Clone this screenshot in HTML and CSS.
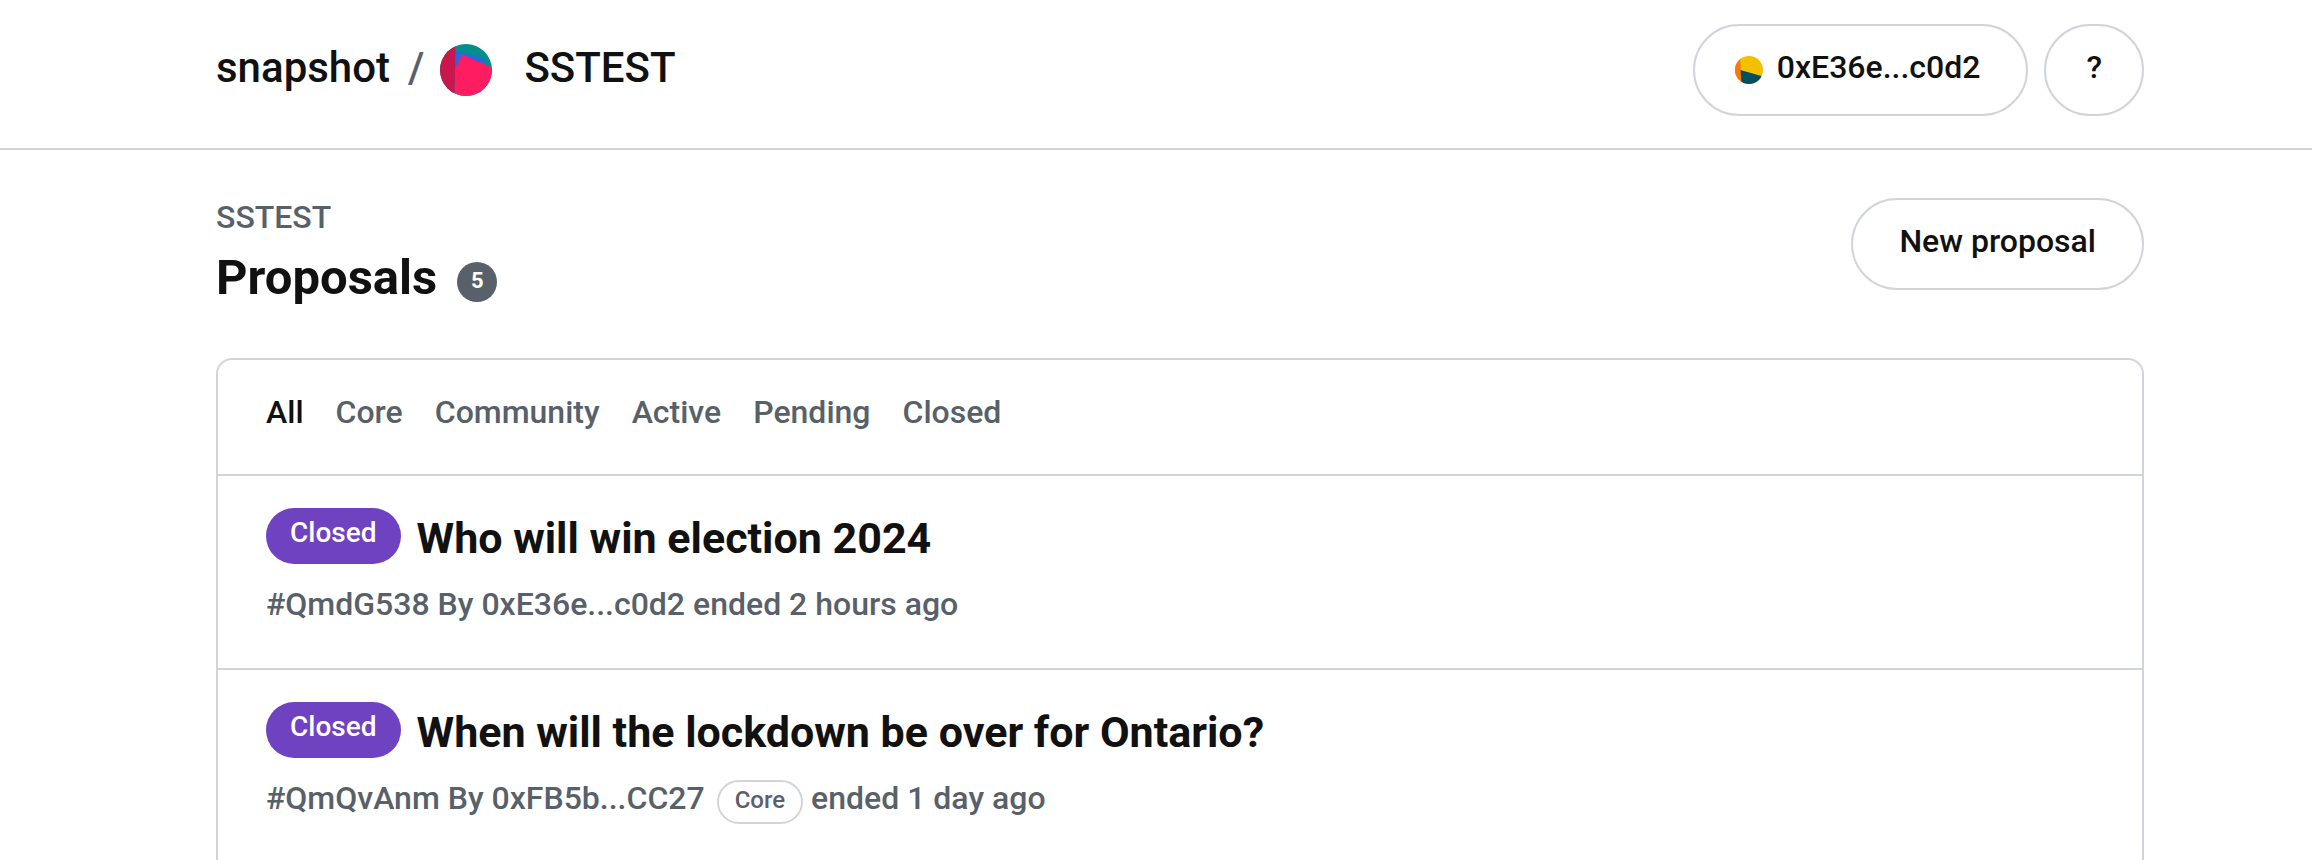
FILE: index.html
```html
<!DOCTYPE html>
<html lang="en">
<head>
<meta charset="utf-8">
<title>SSTEST – Proposals</title>
<link rel="stylesheet" href="styles.css">
</head>
<body>
<header class="topbar">
  <div class="container topbar-inner">
    <nav class="brand" aria-label="Breadcrumb">
      <a href="#" class="brand-text">snapshot</a>
      <span class="slash">/</span>
      <a href="#" class="space">
        <svg class="space-avatar" viewBox="0 0 52 52" aria-hidden="true">
          <defs><clipPath id="disc"><circle cx="26" cy="26" r="26"/></clipPath></defs>
          <g clip-path="url(#disc)">
            <rect width="52" height="52" fill="#018e8c"/>
            <path d="M15 6.500 L45 15 L41 30 L15 30Z" fill="#2469e3"/>
            <path d="M0 0H15.500L14.500 52H0Z" fill="#c9164c"/>
            <path d="M15.500 24.500L22 10.500L53 24V52H14.500Z" fill="#ff1c60"/>
          </g>
        </svg>
        <span class="brand-text">SSTEST</span>
      </a>
    </nav>
    <div class="actions">
      <button class="button account" type="button">
        <svg class="account-avatar" viewBox="0 0 28 28" aria-hidden="true">
          <defs><clipPath id="dot"><circle cx="14" cy="14" r="14"/></clipPath></defs>
          <g clip-path="url(#dot)">
            <rect width="28" height="28" fill="#f3c000"/>
            <path d="M0 0H5L6.500 28H0Z" fill="#fb7806"/>
            <path d="M5.500 14L28 20.500V28H6.500Z" fill="#034f5d"/>
          </g>
        </svg>
        <span>0xE36e...c0d2</span>
      </button>
      <button class="button help" type="button">?</button>
    </div>
  </div>
</header>
<main class="container">
  <div class="page-head">
    <div>
      <a href="#" class="crumb">SSTEST</a>
      <h1 class="page-title">Proposals <span class="counter">5</span></h1>
    </div>
    <button class="button new" type="button">New proposal</button>
  </div>
  <section class="card">
    <nav class="tabs" aria-label="Filter">
      <a href="#" class="tab selected">All</a>
      <a href="#" class="tab">Core</a>
      <a href="#" class="tab">Community</a>
      <a href="#" class="tab">Active</a>
      <a href="#" class="tab">Pending</a>
      <a href="#" class="tab">Closed</a>
    </nav>
    <a href="#" class="proposal">
      <h2 class="proposal-title"><span class="state">Closed</span> <span class="name">Who will win election 2024</span></h2>
      <p class="meta">#QmdG538 By 0xE36e...c0d2 ended 2 hours ago</p>
    </a>
    <a href="#" class="proposal">
      <h2 class="proposal-title"><span class="state">Closed</span> <span class="name">When will the lockdown be over for Ontario?</span></h2>
      <p class="meta">#QmQvAnm By 0xFB5b...CC27 <span class="label">Core</span>ended 1 day ago</p>
    </a>
  </section>
</main>
</body>
</html>
```
FILE: styles.css
```css
:root {
  --text: #586069;
  --heading: #111111;
  --border: #d1d5da;
  --closed: #6f42c1;
}

* {
  box-sizing: border-box;
}

body {
  margin: 0;
  height: 100vh;
  overflow: hidden;
  background: #ffffff;
  color: var(--text);
  font-family: Roboto, "Liberation Sans", sans-serif;
  font-size: 32px;
  font-weight: 500;
  line-height: 48px;
}

a {
  color: inherit;
  text-decoration: none;
}

.container {
  max-width: 1992px;
  margin: 0 auto;
  padding: 0 8px 0 56px;
}

.topbar {
  border-bottom: 2px solid var(--border);
}

.topbar-inner {
  display: flex;
  align-items: flex-start;
  justify-content: space-between;
  padding-top: 24px;
  padding-bottom: 32px;
}

.brand {
  display: flex;
  align-items: center;
  height: 92px;
  color: var(--heading);
  font-size: 42px;
}

.brand-text {
  padding-bottom: 4px;
}

.slash {
  padding: 0 16px 4px 18px;
  color: var(--text);
}

.space {
  display: flex;
  align-items: center;
  gap: 32px;
}

.space-avatar {
  width: 52px;
  height: 52px;
}

.actions {
  display: flex;
  gap: 16px;
}

.button {
  height: 92px;
  padding: 0 46px 6px;
  border: 2px solid var(--border);
  border-radius: 46px;
  background: transparent;
  color: var(--heading);
  font: inherit;
}

.account {
  display: flex;
  align-items: center;
  gap: 14px;
  padding-left: 40px;
}

.account-avatar {
  width: 28px;
  height: 28px;
  margin-top: 6px;
}

.help {
  padding-left: 40px;
  padding-right: 40px;
}

.page-head {
  display: flex;
  align-items: flex-start;
  justify-content: space-between;
  padding: 48px 0;
}

.crumb {
  display: block;
  line-height: 38px;
}

.page-title {
  display: flex;
  align-items: center;
  gap: 20px;
  margin: 0;
  padding-top: 10px;
  color: var(--heading);
  font-size: 49px;
  font-weight: 700;
  line-height: 64px;
}

.counter {
  width: 40px;
  height: 40px;
  margin-top: 8px;
  border-radius: 20px;
  background: var(--text);
  color: #ffffff;
  font-size: 22px;
  line-height: 38px;
  text-align: center;
}

.card {
  border: 2px solid var(--border);
  border-bottom: 0;
  border-radius: 16px 16px 0 0;
}

.tabs {
  display: flex;
  gap: 32px;
  padding: 28px 48px 38px;
}

.selected {
  color: var(--heading);
}

.proposal {
  display: block;
  padding: 32px 48px 40px;
  border-top: 2px solid var(--border);
}

.proposal-title {
  display: flex;
  align-items: center;
  gap: 16px;
  height: 56px;
  margin: 0 0 16px;
  color: var(--heading);
  font-size: 43px;
  font-weight: 700;
  line-height: 52px;
}

.name {
  padding-top: 4px;
}

.state {
  padding: 0 24px;
  height: 56px;
  border-radius: 28px;
  background: var(--closed);
  color: #ffffff;
  font-size: 28px;
  font-weight: 500;
  line-height: 50px;
}

.meta {
  display: flex;
  align-items: center;
  height: 48px;
  margin: 0;
}

.label {
  height: 44px;
  margin: 8px 8px 0 12px;
  padding: 0 16px;
  border: 2px solid var(--border);
  border-radius: 22px;
  font-size: 24px;
  line-height: 36px;
}
```
